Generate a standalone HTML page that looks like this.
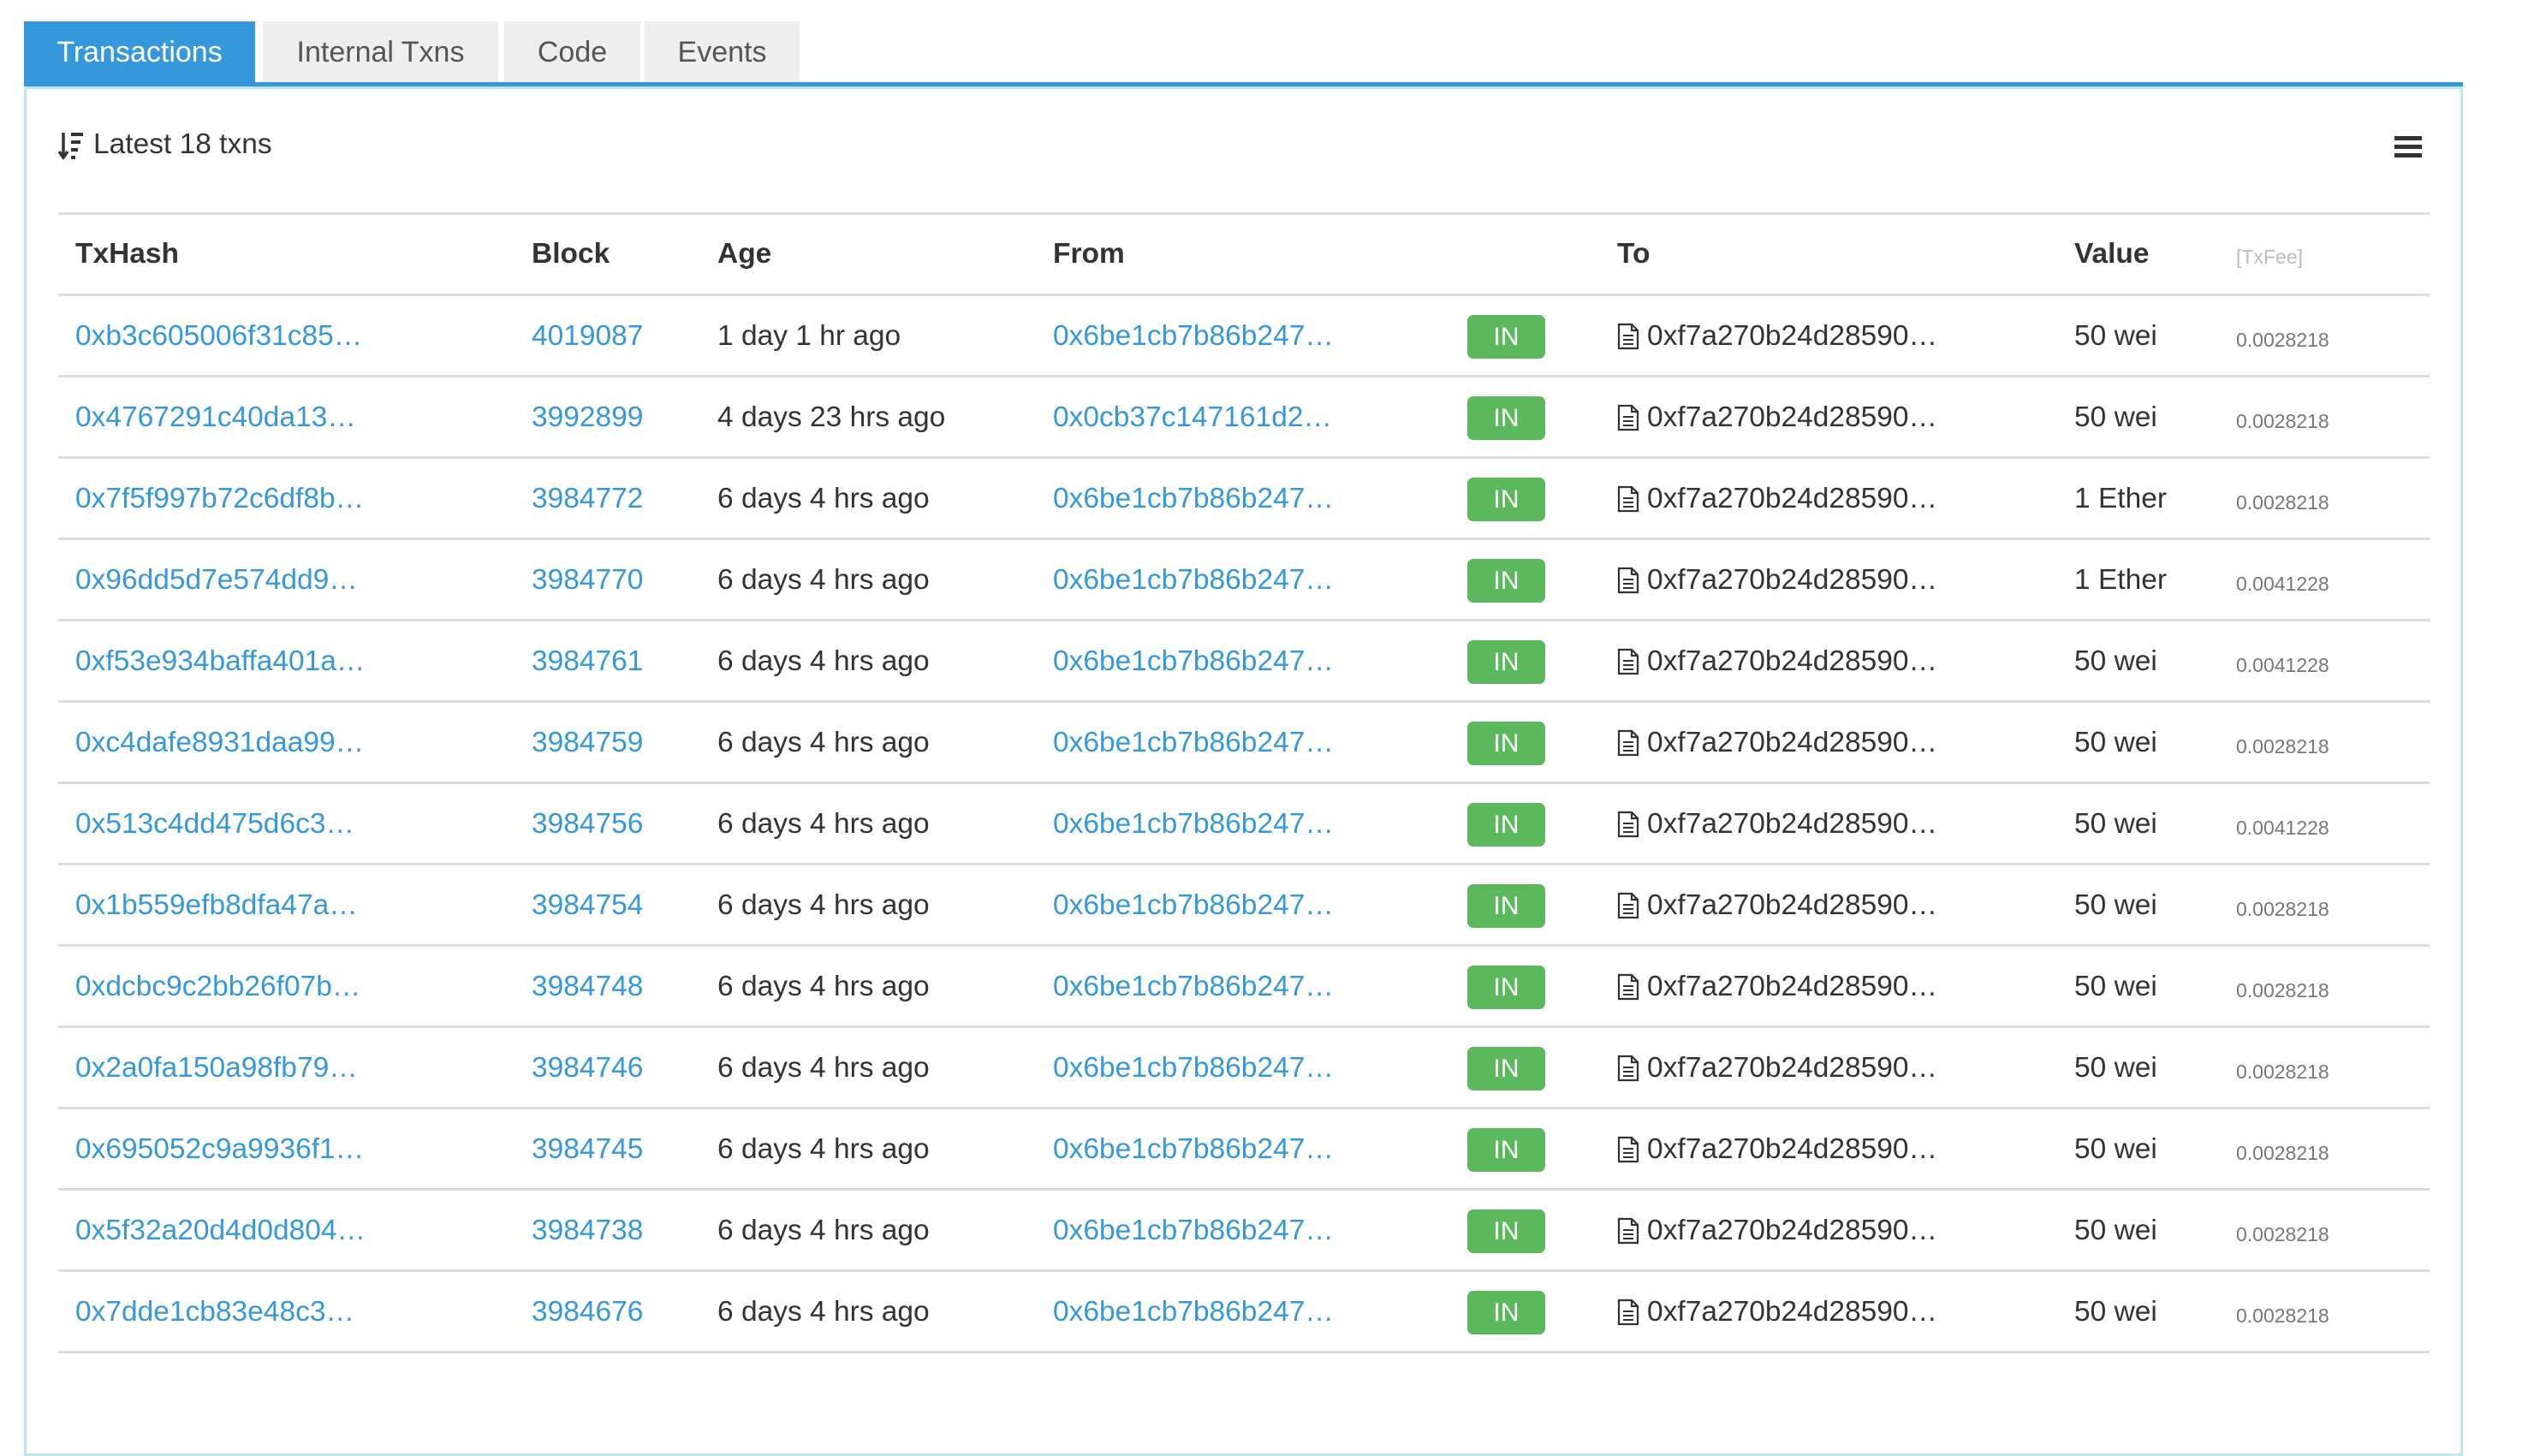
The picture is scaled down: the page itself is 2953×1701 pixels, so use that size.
<!DOCTYPE html>
<html><head><meta charset="utf-8"><style>
*{margin:0;padding:0;box-sizing:border-box}
body{width:2953px;height:1585px;overflow:hidden;background:#fff;font-family:"Liberation Sans",sans-serif;color:#333;position:relative}
.tab{position:absolute;top:25px;height:73px;background:#eee;color:#555;font-size:34px;line-height:73px;text-align:center}
.tab.on{background:#3498db;color:#fff}
.bar{position:absolute;left:28px;top:96px;width:2849px;height:5px;background:#3498db}
.panel{position:absolute;left:28px;top:101px;width:2849px;height:1600px;border:3px solid #bce8f1}
.hl{position:absolute;left:68px;width:2770px;height:3px;background:#ddd}
.c{position:absolute;font-size:33.5px;line-height:40px;white-space:nowrap}
.a{color:#3498db}
.b{font-weight:bold}
.fee{font-size:23px;color:#777}
.in{position:absolute;left:1714px;width:91px;height:51px;background:#5cb85c;border-radius:7px;color:#fff;font-size:30px;line-height:51px;text-align:center}
.doc{position:absolute;left:1889px;width:26px;height:32px}
</style></head><body>
<div class="tab on" style="left:28px;width:270px">Transactions</div>
<div class="tab" style="left:307px;width:275px">Internal Txns</div>
<div class="tab" style="left:589px;width:159px">Code</div>
<div class="tab" style="left:753px;width:181px">Events</div>
<div class="bar"></div>
<div class="panel"></div>
<svg style="position:absolute;left:68px;top:153px" width="32" height="34" viewBox="0 0 32 34"><path d="M6 2V30M1 24L6 31L11 24" stroke="#333" stroke-width="3.5" fill="none"/><rect x="15" y="2" width="14" height="4" fill="#333"/><rect x="15" y="11" width="11" height="4" fill="#333"/><rect x="15" y="20" width="8" height="4" fill="#333"/><rect x="15" y="29" width="5" height="4" fill="#333"/></svg>
<div class="c" style="left:109px;top:149px">Latest 18 txns</div>
<div style="position:absolute;left:2797px;top:159px;width:32px;height:5px;background:#333"></div>
<div style="position:absolute;left:2797px;top:169px;width:32px;height:5px;background:#333"></div>
<div style="position:absolute;left:2797px;top:179px;width:32px;height:5px;background:#333"></div>
<div class="hl" style="top:248px"></div>
<div class="c b" style="left:88px;top:277px">TxHash</div>
<div class="c b" style="left:621px;top:277px">Block</div>
<div class="c b" style="left:838px;top:277px">Age</div>
<div class="c b" style="left:1230px;top:277px">From</div>
<div class="c b" style="left:1889px;top:277px">To</div>
<div class="c b" style="left:2423px;top:277px">Value</div>
<div class="c b fee" style="left:2612px;top:280px;color:#bbb;font-weight:normal">[TxFee]</div>
<div class="hl" style="top:343px"></div>
<div id="rows"></div>
<script>
var d=[["0xb3c605006f31c85…","4019087","1 day 1 hr ago","0x6be1cb7b86b247…","50 wei","0.0028218"],
["0x4767291c40da13…","3992899","4 days 23 hrs ago","0x0cb37c147161d2…","50 wei","0.0028218"],
["0x7f5f997b72c6df8b…","3984772","6 days 4 hrs ago","0x6be1cb7b86b247…","1 Ether","0.0028218"],
["0x96dd5d7e574dd9…","3984770","6 days 4 hrs ago","0x6be1cb7b86b247…","1 Ether","0.0041228"],
["0xf53e934baffa401a…","3984761","6 days 4 hrs ago","0x6be1cb7b86b247…","50 wei","0.0041228"],
["0xc4dafe8931daa99…","3984759","6 days 4 hrs ago","0x6be1cb7b86b247…","50 wei","0.0028218"],
["0x513c4dd475d6c3…","3984756","6 days 4 hrs ago","0x6be1cb7b86b247…","50 wei","0.0041228"],
["0x1b559efb8dfa47a…","3984754","6 days 4 hrs ago","0x6be1cb7b86b247…","50 wei","0.0028218"],
["0xdcbc9c2bb26f07b…","3984748","6 days 4 hrs ago","0x6be1cb7b86b247…","50 wei","0.0028218"],
["0x2a0fa150a98fb79…","3984746","6 days 4 hrs ago","0x6be1cb7b86b247…","50 wei","0.0028218"],
["0x695052c9a9936f1…","3984745","6 days 4 hrs ago","0x6be1cb7b86b247…","50 wei","0.0028218"],
["0x5f32a20d4d0d804…","3984738","6 days 4 hrs ago","0x6be1cb7b86b247…","50 wei","0.0028218"],
["0x7dde1cb83e48c3…","3984676","6 days 4 hrs ago","0x6be1cb7b86b247…","50 wei","0.0028218"]];
var h="";
for(var i=0;i<d.length;i++){var r=d[i];var cy=345+95*i+47.5;var t=cy-20;
h+='<div class="c a" style="left:88px;top:'+t+'px">'+r[0]+'</div>';
h+='<div class="c a" style="left:621px;top:'+t+'px">'+r[1]+'</div>';
h+='<div class="c" style="left:838px;top:'+t+'px">'+r[2]+'</div>';
h+='<div class="c a" style="left:1230px;top:'+t+'px">'+r[3]+'</div>';
h+='<div class="in" style="top:'+(cy-25)+'px">IN</div>';
h+='<svg class="doc" style="top:'+(cy-16)+'px" viewBox="0 0 26 32"><path d="M2 2H17L24 9V30H2Z M17 2V9H24" fill="none" stroke="#333" stroke-width="2.2"/><path d="M7 15H19M7 20H19M7 25H19" stroke="#333" stroke-width="2"/></svg>';
h+='<div class="c" style="left:1924px;top:'+t+'px">0xf7a270b24d28590…</div>';
h+='<div class="c" style="left:2423px;top:'+t+'px">'+r[4]+'</div>';
h+='<div class="c fee" style="left:2612px;top:'+(t+4)+'px">'+r[5]+'</div>';
h+='<div class="hl" style="top:'+(345+95*(i+1)-2)+'px"></div>';}
document.getElementById("rows").innerHTML=h;
</script>
</body></html>
